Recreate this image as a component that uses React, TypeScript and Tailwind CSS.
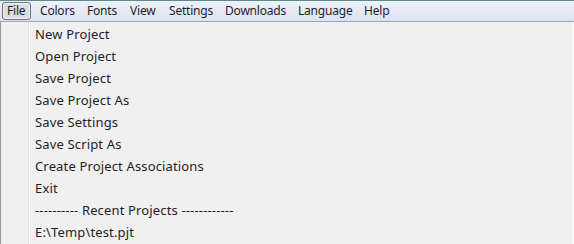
import React from 'react';

// Classic Windows-style menu bar with the File menu dropped down

const menus = [
  { label: 'File', w: 'w-[33px]' },
  { label: 'Colors', w: 'w-[47px]' },
  { label: 'Fonts', w: 'w-[43px]' },
  { label: 'View', w: 'w-[39px]' },
  { label: 'Settings', w: 'w-[56px]' },
  { label: 'Downloads', w: 'w-[73px]' },
  { label: 'Language', w: 'w-[66px]' },
  { label: 'Help', w: 'w-[40px]' },
];

const fileItems = [
  'New Project',
  'Open Project',
  'Save Project',
  'Save Project As',
  'Save Settings',
  'Save Script As',
  'Create Project Associations',
  'Exit',
  '---------- Recent Projects ------------',
  'E:\\Temp\\test.pjt',
];

export default function App() {
  return (
    <div className="w-[574px] h-[244px] bg-[#f0f0f0] overflow-hidden text-[#1e1e2a] font-['Noto_Sans','Open_Sans',sans-serif]">
      {/* Menu bar */}
      <div className="h-[22px] text-[12px] tracking-[-0.2px] border-t border-[#5f8b90] border-b border-b-[#a0a4ab] bg-gradient-to-b from-[#eef1f8] to-[#dce3f2] flex items-center pl-[2px]">
        {menus.map((m, i) => (
          <div key={m.label} className={m.w + ' h-[18px] flex items-center'}>
            {i === 0 ? (
              <span className="h-[18px] w-[29px] flex items-center pl-[4px] rounded-[3px] border border-[#6b6f78] bg-[#dbdde3] shadow-[inset_0_0_0_1px_#f4f5f8]">
                {m.label}
              </span>
            ) : (
              <span className="pl-[5px]">{m.label}</span>
            )}
          </div>
        ))}
      </div>

      {/* Dropdown */}
      <div className="flex h-full text-[13px] tracking-[0.15px]">
        <div className="w-[28px] border-l border-[#979797] bg-[#f0f0f0]" />
        <div className="w-px bg-[#e2e3e3]" />
        <div className="w-px bg-white" />
        <div className="flex-1 flex flex-col pt-[2px] pl-[5px]">
          {fileItems.map((item) => (
            <div key={item} className="h-[22px] flex items-center whitespace-pre">
              {item}
            </div>
          ))}
        </div>
        <div className="w-[2px] bg-[#f7f7f7]" />
      </div>
    </div>
  );
}
